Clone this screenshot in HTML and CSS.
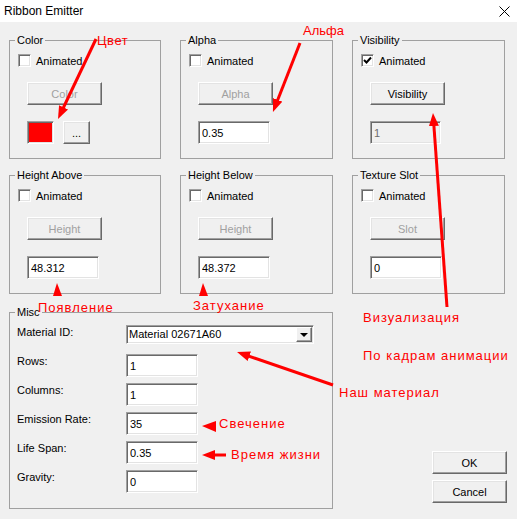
FILE: index.html
```html
<!DOCTYPE html>
<html lang="ru">

<head>
    <meta charset="UTF-8">
    <title>Ribbon Emitter</title>
    <link rel="stylesheet" href="styles.css">
</head>

<body>
    <div class="titlebar">
        <span class="title">Ribbon Emitter</span>
        <svg class="close" width="11" height="11" viewBox="0 0 11 11">
            <path d="M0.5 0.5 L10.5 10.5 M10.5 0.5 L0.5 10.5" stroke="#000" stroke-width="1" />
        </svg>
    </div>

    <div class="client">
        <div class="groups">
            <fieldset class="group">
                <legend>Color</legend>
                <div class="group-body">
                    <label class="check"><span class="box"></span>Animated</label>
                    <button class="btn" disabled>Color</button>
                    <div class="field">
                        <span class="swatch"></span>
                        <button class="btn btn-small">...</button>
                    </div>
                </div>
            </fieldset>

            <fieldset class="group">
                <legend>Alpha</legend>
                <div class="group-body">
                    <label class="check"><span class="box"></span>Animated</label>
                    <button class="btn" disabled>Alpha</button>
                    <div class="field"><input class="input" type="text" value="0.35"></div>
                </div>
            </fieldset>

            <fieldset class="group">
                <legend>Visibility</legend>
                <div class="group-body">
                    <label class="check">
                        <span class="box">
                            <svg width="11" height="11" viewBox="0 0 11 11">
                                <path d="M2 5 L4.5 7.5 L9 2.5" fill="none" stroke="#000" stroke-width="2" />
                            </svg>
                        </span>Animated
                    </label>
                    <button class="btn">Visibility</button>
                    <div class="field"><input class="input input-off" type="text" value="1" disabled></div>
                </div>
            </fieldset>

            <fieldset class="group">
                <legend>Height Above</legend>
                <div class="group-body">
                    <label class="check"><span class="box"></span>Animated</label>
                    <button class="btn" disabled>Height</button>
                    <div class="field"><input class="input" type="text" value="48.312"></div>
                </div>
            </fieldset>

            <fieldset class="group">
                <legend>Height Below</legend>
                <div class="group-body">
                    <label class="check"><span class="box"></span>Animated</label>
                    <button class="btn" disabled>Height</button>
                    <div class="field"><input class="input" type="text" value="48.372"></div>
                </div>
            </fieldset>

            <fieldset class="group">
                <legend>Texture Slot</legend>
                <div class="group-body">
                    <label class="check"><span class="box"></span>Animated</label>
                    <button class="btn" disabled>Slot</button>
                    <div class="field"><input class="input" type="text" value="0"></div>
                </div>
            </fieldset>
        </div>

        <div class="bottom">
            <fieldset class="group misc">
                <legend>Misc</legend>
                <div class="misc-body">
                    <span class="lbl">Material ID:</span>
                    <div class="combo">
                        <span class="combo-text">Material 02671A60</span>
                        <span class="drop"></span>
                    </div>
                    <span class="lbl">Rows:</span>
                    <input class="input" type="text" value="1">
                    <span class="lbl">Columns:</span>
                    <input class="input" type="text" value="1">
                    <span class="lbl">Emission Rate:</span>
                    <input class="input" type="text" value="35">
                    <span class="lbl">Life Span:</span>
                    <input class="input" type="text" value="0.35">
                    <span class="lbl">Gravity:</span>
                    <input class="input" type="text" value="0">
                </div>
            </fieldset>

            <div class="actions">
                <button class="btn">OK</button>
                <button class="btn">Cancel</button>
            </div>
        </div>
    </div>

    <!-- пометки поверх окна -->
    <div class="notes">
        <svg class="arrows" width="517" height="519" viewBox="0 0 517 519">
            <defs>
                <marker id="head" markerUnits="userSpaceOnUse" markerWidth="14" markerHeight="10" refX="3" refY="5" orient="auto">
                    <path d="M0 0 L13 5 L0 10 z" fill="#f00" />
                </marker>
            </defs>
            <g stroke="#f00" stroke-width="3" marker-end="url(#head)">
                <line x1="96" y1="39" x2="62.3" y2="110" />
                <line x1="300" y1="43" x2="276.6" y2="102.7" />
                <line x1="447" y1="307" x2="433.7" y2="123" />
                <line x1="333" y1="385" x2="246.5" y2="355.3" />
                <line x1="226" y1="455" x2="212" y2="455" />
            </g>
            <g fill="#f00">
                <polygon points="57,283 53,296 62,296" />
                <polygon points="203,283 199,296 208,296" />
                <polygon points="202,426 216,421 216,432" />
            </g>
        </svg>
        <span class="note n-color">Цвет</span>
        <span class="note n-alpha">Альфа</span>
        <span class="note n-appear">Появление</span>
        <span class="note n-fade">Затухание</span>
        <span class="note n-vis">Визуализация</span>
        <span class="note n-frames">По кадрам анимации</span>
        <span class="note n-mat">Наш материал</span>
        <span class="note n-glow">Свечение</span>
        <span class="note n-life">Время жизни</span>
    </div>
</body>

</html>
```

FILE: styles.css
```css
* {
    box-sizing: border-box;
}

body {
    margin: 0;
    width: 517px;
    height: 519px;
    position: relative;
    overflow: hidden;
    background-color: #f0f0f0;
    font-family: "Liberation Sans", Arial, sans-serif;
    font-size: 11px;
    color: #000;
}

.titlebar {
    height: 22px;
    background-color: #fff;
    display: flex;
    align-items: center;
    justify-content: space-between;
    padding: 0 7px 0 4px;
}

.title {
    font-size: 12px;
}

.client {
    padding: 12px 0 0 9px;
}

.groups {
    display: grid;
    grid-template-columns: 152px 153px 153px;
    column-gap: 19px;
    row-gap: 10px;
}

.group {
    margin: 0;
    padding: 0;
    min-width: 0;
    border: 1px solid #a0a0a0;
}

.group legend {
    margin-left: 5px;
    padding: 0 2px;
    line-height: 13px;
}

.group-body {
    padding: 7px 8px 14px;
}

.check {
    display: flex;
    align-items: center;
    gap: 5px;
    height: 13px;
}

.box,
.input,
.swatch,
.combo {
    border: 1px solid;
    border-color: #a0a0a0 #fff #fff #a0a0a0;
    box-shadow: inset 1px 1px #696969, inset -1px -1px #e3e3e3;
}

.box {
    width: 13px;
    height: 13px;
    background-color: #fff;
    display: flex;
}

.box svg {
    margin: 0 0 0 0;
}

.btn {
    display: block;
    width: 75px;
    height: 23px;
    margin: 15px 0 0 9px;
    padding: 0;
    font: inherit;
    color: #000;
    background-color: #f0f0f0;
    border: 1px solid;
    border-color: #fff #696969 #696969 #fff;
    box-shadow: inset -1px -1px #a0a0a0, inset 1px 1px #e3e3e3;
}

.btn:disabled {
    color: #a0a0a0;
}

.field {
    display: flex;
    gap: 9px;
    margin: 16px 0 0 9px;
}

.swatch {
    width: 27px;
    height: 23px;
    background-color: #f00;
}

.btn-small {
    width: 27px;
    margin: 0;
}

.input {
    -webkit-appearance: none;
    appearance: none;
    width: 72px;
    height: 23px;
    margin: 0;
    padding: 0 3px;
    font: inherit;
    color: #000;
    background-color: #fff;
    outline: none;
}

.input-off {
    width: 71px;
    color: #6d6d6d;
    background-color: #f0f0f0;
}

.bottom {
    display: flex;
    margin-top: 12px;
}

.misc {
    width: 324px;
}

.misc-body {
    display: grid;
    grid-template-columns: 109px 188px;
    grid-auto-rows: 29px;
    align-items: start;
    padding: 6px 0 9px 7px;
}

.lbl {
    padding-top: 1px;
    line-height: 13px;
}

.combo {
    height: 19px;
    display: flex;
    background-color: #fff;
    padding: 1px 1px 1px 2px;
}

.combo-text {
    flex: 1;
    line-height: 15px;
}

.drop {
    width: 16px;
    height: 15px;
    position: relative;
    background-color: #f0f0f0;
    border: 1px solid;
    border-color: #fff #696969 #696969 #fff;
    box-shadow: inset -1px -1px #a0a0a0;
}

/* треугольник стрелки списка */
.drop::after {
    content: "";
    position: absolute;
    left: 3px;
    top: 5px;
    border-left: 4px solid transparent;
    border-right: 4px solid transparent;
    border-top: 4px solid #000;
}

.actions {
    display: flex;
    flex-direction: column;
    gap: 6px;
    align-self: flex-end;
    margin: 0 10px 6px auto;
}

.actions .btn {
    margin: 0;
}

.notes {
    position: absolute;
    left: 0;
    top: 0;
    width: 517px;
    height: 519px;
    pointer-events: none;
}

.arrows {
    position: absolute;
    left: 0;
    top: 0;
}

.note {
    position: absolute;
    color: #f00;
    font-size: 13px;
    line-height: 15px;
    letter-spacing: 1px;
    white-space: nowrap;
}

.n-color {
    left: 97px;
    top: 33px;
    letter-spacing: 0.5px;
}

.n-alpha {
    left: 303px;
    top: 23px;
    letter-spacing: 0;
}

.n-appear {
    left: 38px;
    top: 300px;
}

.n-fade {
    left: 193px;
    top: 298px;
}

.n-vis {
    left: 363px;
    top: 310px;
}

.n-frames {
    left: 363px;
    top: 348px;
}

.n-mat {
    left: 339px;
    top: 385px;
}

.n-glow {
    left: 219px;
    top: 416px;
}

.n-life {
    left: 231px;
    top: 447px;
}
```
